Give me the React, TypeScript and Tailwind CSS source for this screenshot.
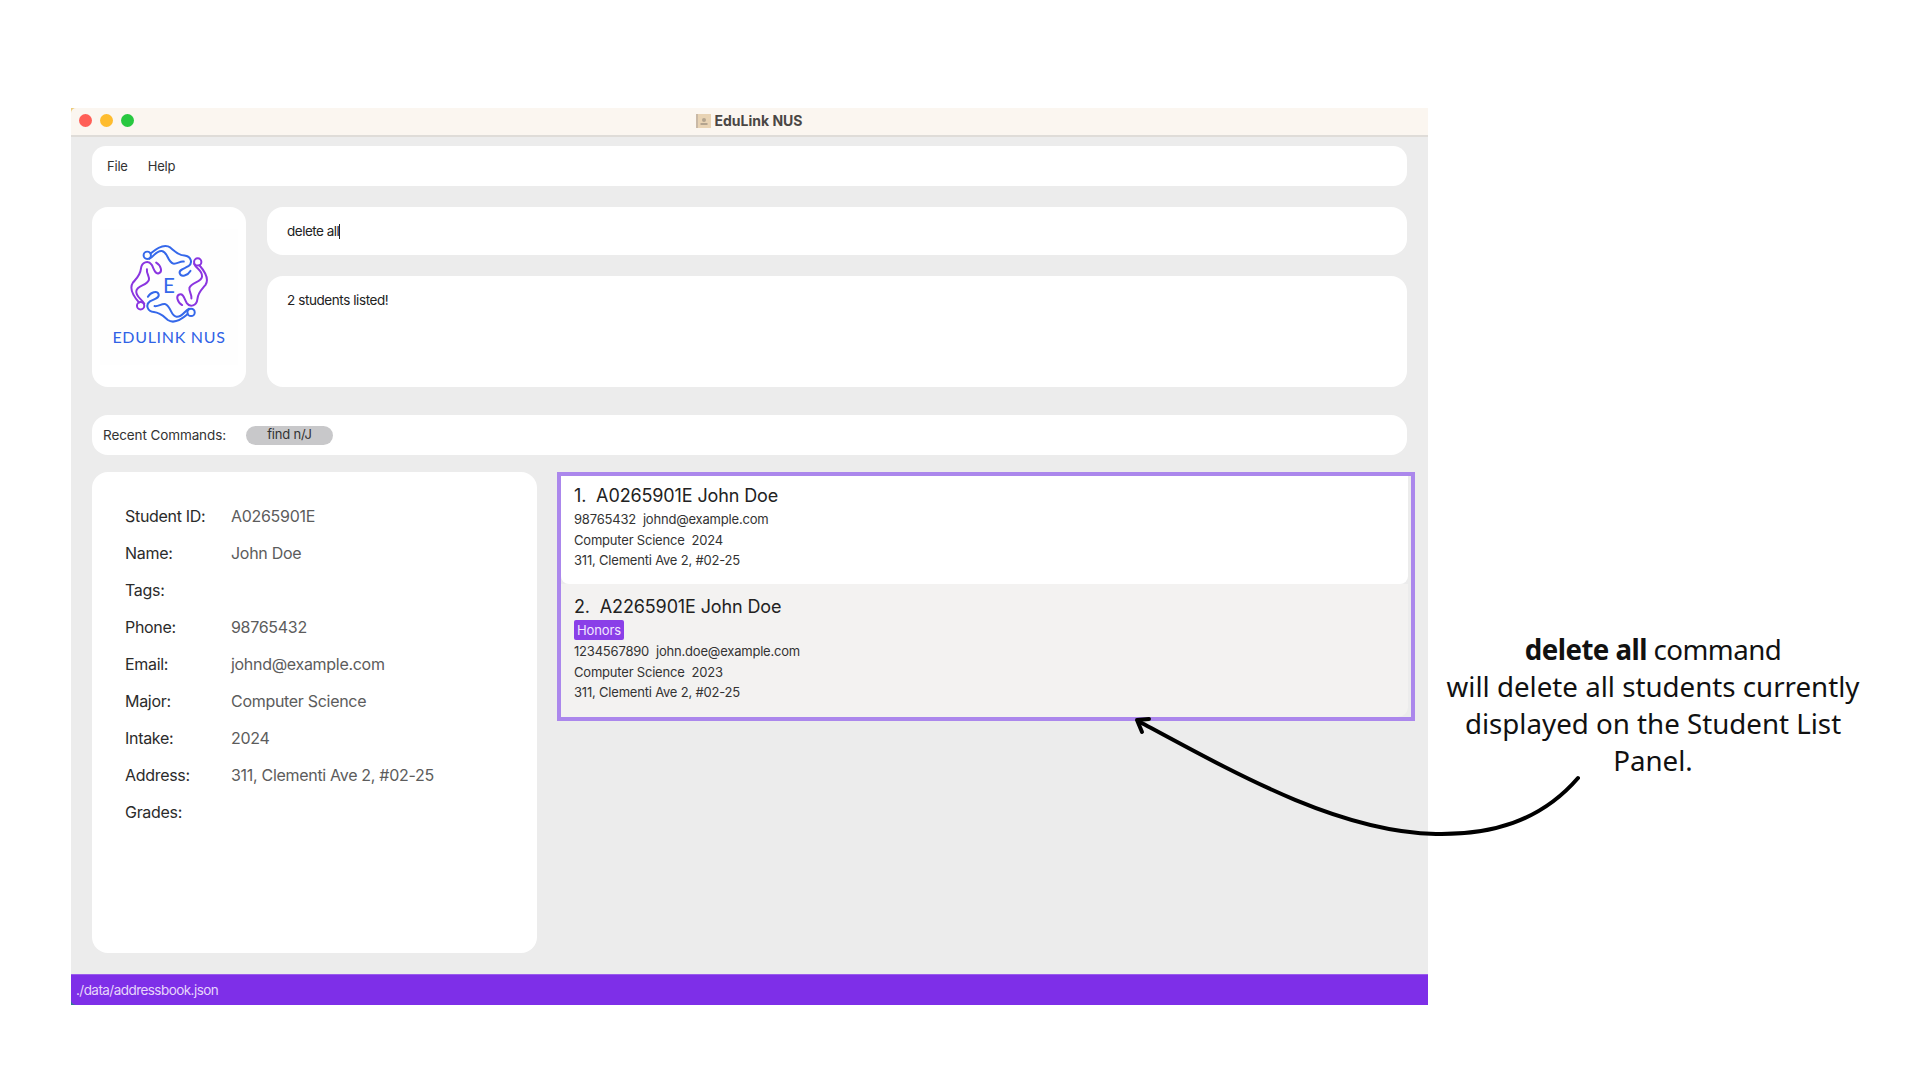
import React from "react";

const UI = { fontFamily: "Inter, 'Noto Sans', sans-serif" };

function Arm({ color, angle }: { color: string; angle: number }) {
  return (
    <g transform={`rotate(${angle} 328 551)`} stroke={color} strokeWidth="6">
      <circle cx="262" cy="465" r="11" />
      <path d="M272 460C288 446 312 428 332 442C346 454 354 464 374 466C394 468 400 488 386 498C372 506 356 508 360 520C364 532 384 526 392 512" />
      <path d="M268 476C282 470 288 450 306 452C324 454 322 484 340 490C352 492 360 482 372 484" />
    </g>
  );
}

function Logo() {
  return (
    <div className="w-[138px] h-[136px] flex flex-col items-center bg-[#fefefe]">
      <svg width="82" height="83" viewBox="205 425 245 250" className="mt-[13px]" fill="none" strokeLinecap="round" strokeLinejoin="round">
        <Arm color="#3568ea" angle={0} />
        <Arm color="#8a35e0" angle={90} />
        <Arm color="#3568ea" angle={180} />
        <Arm color="#8a35e0" angle={270} />
        <text x="327" y="580" textAnchor="middle" fontSize="62" fill="#3568ea" style={{ fontFamily: "Lato, sans-serif" }}>E</text>
      </svg>
      <div className="text-[16px] leading-[16px] tracking-[0.7px] text-[#2f62e6] mt-[4px] whitespace-nowrap" style={{ fontFamily: "Lato, sans-serif" }}>
        EDULINK NUS
      </div>
    </div>
  );
}

function Row({ label, value }: { label: string; value?: string }) {
  return (
    <div className="flex h-[37px] items-center text-[16px] tracking-[-0.3px]">
      <div className="w-[106px] text-[#2b2b2b]">{label}</div>
      <div className="text-[#5c5c5c]">{value}</div>
    </div>
  );
}

function Card({
  n, id, tag, phone, email, intake, cls,
}: { n: number; id: string; tag?: string; phone: string; email: string; intake: string; cls: string }) {
  return (
    <div className={cls}>
      <div className="text-[18px] leading-[24px] text-[#222] tracking-[-0.13px] whitespace-pre">{`${n}.  ${id} John Doe`}</div>
      {tag && (
        <div className="mt-[1px] w-fit h-[20px] px-[3px] rounded-[2px] bg-[#8a3fe8] text-[#f3e8ff] text-[13px] leading-[20px] tracking-[-0.1px]">
          {tag}
        </div>
      )}
      <div className="text-[13px] leading-[20.5px] text-[#333] tracking-[-0.2px] whitespace-pre mt-[1px]">{`${phone}  ${email}`}</div>
      <div className="text-[13px] leading-[20px] text-[#333] tracking-[-0.2px] whitespace-pre">{`Computer Science  ${intake}`}</div>
      <div className="text-[13px] leading-[20.5px] text-[#333] tracking-[-0.2px] whitespace-pre">311, Clementi Ave 2, #02-25</div>
    </div>
  );
}

export default function App() {
  return (
    <div className="relative w-full h-screen bg-white overflow-hidden pt-[108px] pl-[71px]" style={UI}>
      <div className="w-[1357px] h-[897px] flex flex-col bg-[#ececec]">
        <div className="h-[29px] shrink-0 bg-[#eccb7c]">
          <div className="relative h-full rounded-tl-[5px] bg-[#fbf6f0] border-b-2 border-[#dfdcd8] pb-[2px] flex items-center justify-center gap-[4px] pr-[1px]">
            <div className="absolute left-[8px] top-[6px] flex gap-[8px]">
              <span className="w-[13px] h-[13px] rounded-full bg-[#ff5f57]" />
              <span className="w-[13px] h-[13px] rounded-full bg-[#febc2e]" />
              <span className="w-[13px] h-[13px] rounded-full bg-[#28c840]" />
            </div>
            <svg width="15" height="14" viewBox="0 0 15 14">
              <rect width="15" height="14" fill="#e8d3b4" />
              <rect width="2" height="14" fill="#c9b9a6" />
              <circle cx="8" cy="6" r="2" fill="#b3a48f" />
              <rect x="4.5" y="9" width="7" height="2" fill="#b3a48f" />
            </svg>
            <span className="text-[14px] font-bold text-[#4a4644]">EduLink NUS</span>
          </div>
        </div>

        <div className="flex-1 flex flex-col px-[21px] pt-[9px]">
          <div className="h-[40px] w-[1315px] rounded-[14px] bg-white flex items-center pl-[15px] pt-[1px] gap-[20px] text-[13px] text-[#333] tracking-[-0.2px]">
            <span>File</span>
            <span>Help</span>
          </div>

          <div className="flex gap-[21px] mt-[21px]">
            <div className="w-[154px] h-[180px] rounded-[16px] bg-white pl-[8px] pt-[22px]">
              <Logo />
            </div>
            <div className="w-[1140px] flex flex-col gap-[21px]">
              <div className="h-[48px] rounded-[16px] bg-white flex items-center pl-[20px] text-[13.5px] text-[#222] tracking-[-0.5px]">
                <span>delete all</span>
                <span className="w-[1px] h-[15px] bg-[#222]" />
              </div>
              <div className="h-[111px] rounded-[16px] bg-white pl-[20px] pt-[14px] text-[13.5px] leading-[20px] text-[#222] tracking-[-0.42px]">
                2 students listed!
              </div>
            </div>
          </div>

          <div className="h-[40px] w-[1315px] mt-[28px] rounded-[16px] bg-white flex items-center pl-[11px] text-[13.5px] text-[#333] tracking-[-0.1px]">
            <span className="w-[143px]">Recent Commands:</span>
            <span className="w-[87px] h-[19px] rounded-full bg-[#c8c8ca] flex items-center justify-center text-[13px] tracking-[-0.2px]">find n/J</span>
          </div>

          <div className="flex mt-[17px] items-start">
            <div className="w-[445px] shrink-0 h-[481px] rounded-[16px] bg-white pl-[33px] pt-[25px]">
              <Row label="Student ID:" value="A0265901E" />
              <Row label="Name:" value="John Doe" />
              <Row label="Tags:" />
              <Row label="Phone:" value="98765432" />
              <Row label="Email:" value="johnd@example.com" />
              <Row label="Major:" value="Computer Science" />
              <Row label="Intake:" value="2024" />
              <Row label="Address:" value="311, Clementi Ave 2, #02-25" />
              <Row label="Grades:" />
            </div>
            <div className="ml-[20px] w-[858px] shrink-0 h-[249px] border-[4px] border-[#ab87ec] flex flex-col">
              <Card
                n={1} id="A0265901E" phone="98765432" email="johnd@example.com" intake="2024"
                cls="h-[108px] w-[847px] rounded-b-[8px] bg-white pl-[13px] pt-[8px]"
              />
              <Card
                n={2} id="A2265901E" tag="Honors" phone="1234567890" email="john.doe@example.com" intake="2023"
                cls="flex-1 rounded-br-[10px] bg-[#f3f2f1] mr-[3px] pl-[13px] pt-[11px]"
              />
            </div>
          </div>
        </div>

        <div className="h-[31px] shrink-0 bg-[#2a7f8f]">
          <div className="h-full bg-[#7e2fe8] border-t border-[#9a5cec] rounded-bl-[5px] flex items-center pl-[5px] text-[13.5px] text-[#e6d5fb] tracking-[-0.55px]">
            ./data/addressbook.json
          </div>
        </div>
      </div>

      <div className="absolute left-[1433px] top-[631px] w-[440px] text-center text-[27.7px] leading-[37px] text-[#111]" style={{ fontFamily: "'Noto Sans', sans-serif" }}>
        <div className="tracking-[-0.55px]"><span className="font-bold">delete all</span> command</div>
        <div>will delete all students currently</div>
        <div>displayed on the Student List</div>
        <div>Panel.</div>
      </div>

      <svg className="absolute left-0 top-0" width="1920" height="1080" viewBox="0 0 1920 1080" fill="none">
        <path d="M1578 778C1540 822 1490 835 1436 834C1340 832 1240 776 1140 722" stroke="#000" strokeWidth="4" strokeLinecap="round" />
        <path d="M1149 719L1137 720L1142 732" stroke="#000" strokeWidth="4" strokeLinecap="round" strokeLinejoin="round" />
      </svg>
    </div>
  );
}
